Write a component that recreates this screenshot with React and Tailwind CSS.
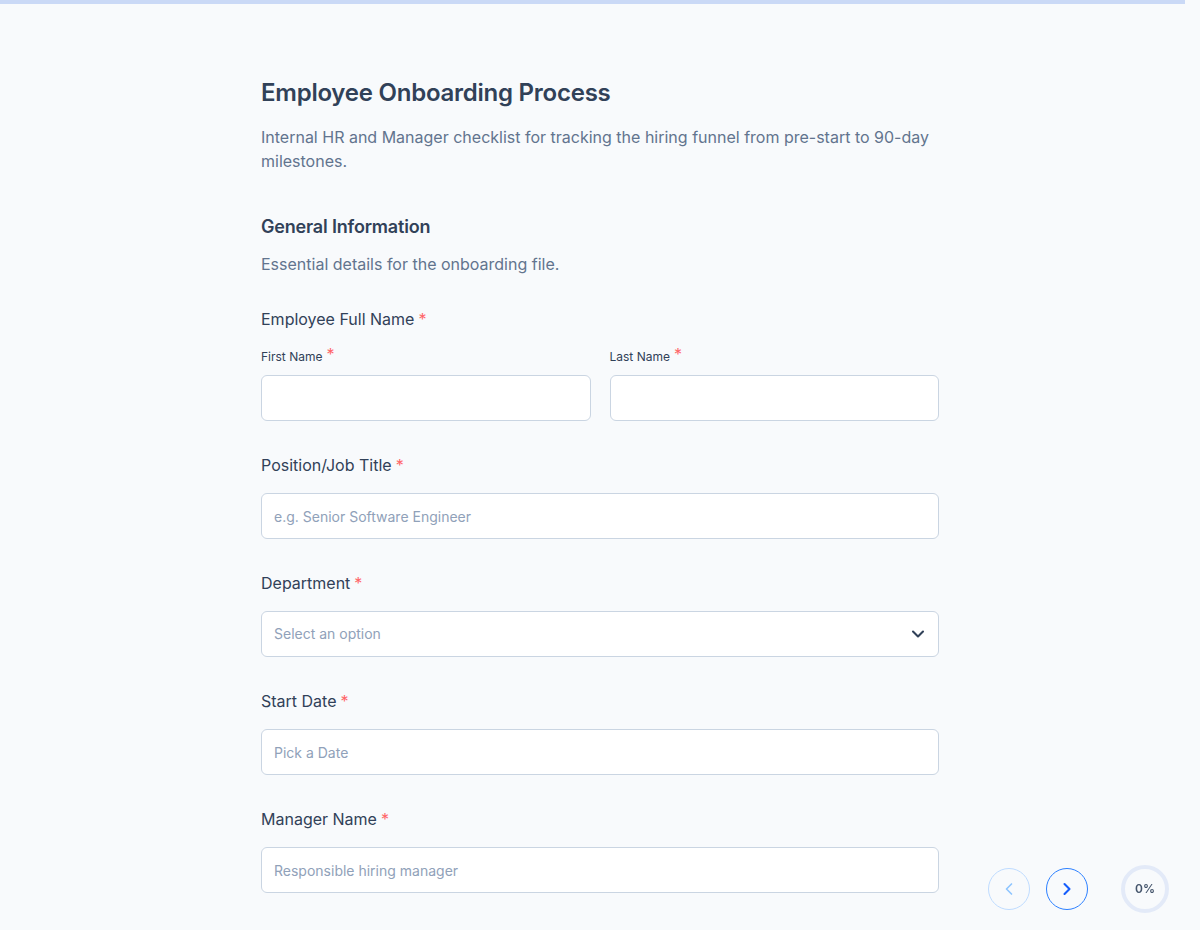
import { ChevronDown, ChevronLeft, ChevronRight } from 'lucide-react'

function Star({ big }) {
  return <span className={big ? 'text-red-400 ml-1 text-base leading-[0] relative top-[-1px]' : 'text-red-400 ml-1'}>*</span>
}

function Field({ label, placeholder, select }) {
  return (
    <div className="mt-[32px]">
      <label className="block text-base leading-6 text-slate-700">
        {label}
        <Star />
      </label>
      <div className="mt-4 relative">
        {select ? (
          <div className="h-[46px] w-full rounded-md border border-slate-300 bg-white pl-3 pr-2.5 flex items-center justify-between">
            <span className="text-sm text-slate-400">{placeholder}</span>
            <ChevronDown className="w-5 h-5 text-slate-700" strokeWidth={2.5} />
          </div>
        ) : (
          <input
            type="text"
            placeholder={placeholder}
            className="h-[46px] w-full rounded-md border border-slate-300 bg-white px-3 text-sm text-slate-700 placeholder:text-slate-400 outline-none"
          />
        )}
      </div>
    </div>
  )
}

export default function App() {
  return (
    <div className="min-h-screen bg-slate-50" style={{ fontFamily: 'Inter, "Noto Sans", sans-serif' }}>
      <div className="fixed top-0 left-0 h-1 w-[1185px] bg-[#cad9f6]" />
      <div className="mx-auto w-[678px] pt-[77px] pb-10">
        <h1 className="text-2xl leading-8 font-semibold tracking-[-0.01em] text-slate-700">Employee Onboarding Process</h1>
        <p className="mt-4 text-base leading-6 text-slate-500">
          Internal HR and Manager checklist for tracking the hiring funnel from pre-start to 90-day milestones.
        </p>

        <h2 className="mt-10 text-lg leading-7 font-semibold tracking-[-0.01em] text-slate-700">General Information</h2>
        <p className="mt-[11px] text-base leading-6 text-slate-500">Essential details for the onboarding file.</p>

        <div className="mt-[31px]">
          <label className="block text-base leading-6 text-slate-700">
            Employee Full Name
            <Star />
          </label>
          <div className="mt-[18px] grid grid-cols-2 gap-[19px]">
            <div>
              <label className="block h-4 text-xs leading-4 text-slate-700">
                First Name
                <Star big />
              </label>
              <input
                type="text"
                className="mt-[10px] h-[46px] w-full rounded-md border border-slate-300 bg-white px-3 text-sm outline-none"
              />
            </div>
            <div>
              <label className="block h-4 text-xs leading-4 text-slate-700">
                Last Name
                <Star big />
              </label>
              <input
                type="text"
                className="mt-[10px] h-[46px] w-full rounded-md border border-slate-300 bg-white px-3 text-sm outline-none"
              />
            </div>
          </div>
        </div>

        <Field label="Position/Job Title" placeholder="e.g. Senior Software Engineer" />
        <Field label="Department" placeholder="Select an option" select />
        <Field label="Start Date" placeholder="Pick a Date" />
        <Field label="Manager Name" placeholder="Responsible hiring manager" />
      </div>

      <div className="fixed left-[988px] top-[868px] flex items-center gap-4">
        <button className="w-[42px] h-[42px] rounded-full border border-blue-200 flex items-center justify-center text-blue-300">
          <ChevronLeft className="w-5 h-5" strokeWidth={2} />
        </button>
        <button className="w-[42px] h-[42px] rounded-full border border-blue-500 flex items-center justify-center text-blue-600">
          <ChevronRight className="w-5 h-5" strokeWidth={2.5} />
        </button>
      </div>
      <div className="fixed left-[1121px] top-[865px] w-12 h-12 rounded-full border-4 border-[#e3eaf8] flex items-center justify-center">
        <span className="text-xs font-semibold text-slate-600">0%</span>
      </div>
    </div>
  )
}
